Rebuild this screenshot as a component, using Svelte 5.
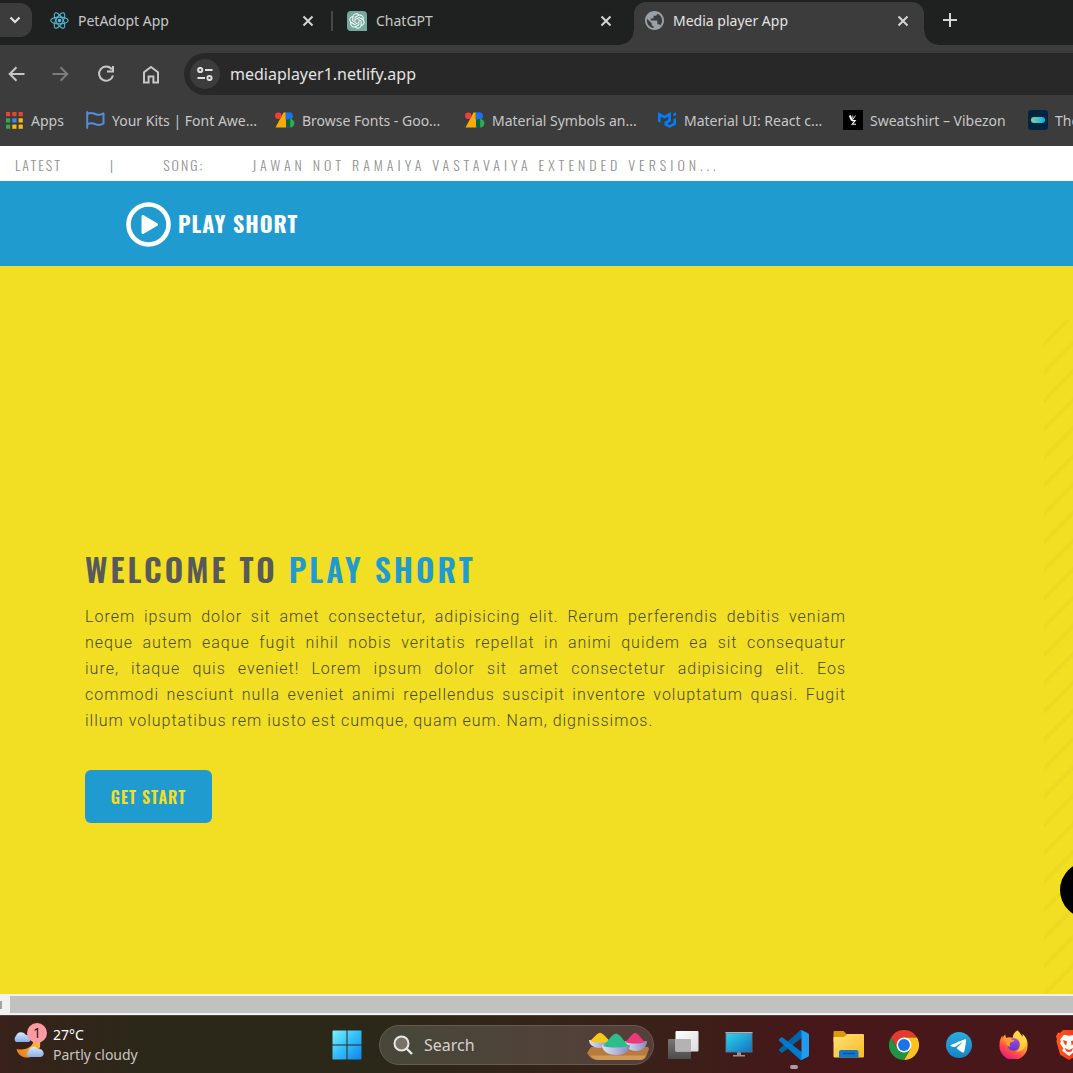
<script>
  const tabs = [
    { title: 'PetAdopt App', icon: 'react', active: false },
    { title: 'ChatGPT', icon: 'gpt', active: false },
    { title: 'Media player App', icon: 'globe', active: true }
  ];

  const bookmarks = [
    { title: 'Apps', icon: 'apps' },
    { title: 'Your Kits | Font Awe...', icon: 'flag' },
    { title: 'Browse Fonts - Goo...', icon: 'gfonts' },
    { title: 'Material Symbols an...', icon: 'gfonts' },
    { title: 'Material UI: React c...', icon: 'mui' },
    { title: 'Sweatshirt – Vibezon', icon: 'vibezon' },
    { title: 'The', icon: 'tmdb' }
  ];

  const introLines = [
    'Lorem ipsum dolor sit amet consectetur, adipisicing elit. Rerum perferendis debitis veniam',
    'neque autem eaque fugit nihil nobis veritatis repellat in animi quidem ea sit consequatur',
    'iure, itaque quis eveniet! Lorem ipsum dolor sit amet consectetur adipisicing elit. Eos',
    'commodi nesciunt nulla eveniet animi repellendus suscipit inventore voluptatum quasi. Fugit',
    'illum voluptatibus rem iusto est cumque, quam eum. Nam, dignissimos.'
  ];

  const apps = [
    { name: 'Task View', icon: 'taskview' },
    { name: 'Desktop', icon: 'desktop' },
    { name: 'Visual Studio Code', icon: 'vscode', running: true },
    { name: 'File Explorer', icon: 'folder' },
    { name: 'Google Chrome', icon: 'chrome' },
    { name: 'Telegram', icon: 'telegram' },
    { name: 'Firefox', icon: 'firefox' },
    { name: 'Brave', icon: 'brave' }
  ];

  const appColors = ['#ea4335', '#ea4335', '#ea4335', '#34a853', '#4285f4', '#fbbc04', '#34a853', '#fbbc04', '#fbbc04'];
  let address = $state('mediaplayer1.netlify.app');
</script>

{#snippet icon(name)}
  {#if name === 'react'}
    <svg width="19" height="19" viewBox="0 0 24 24" fill="none" stroke="#4fb9d6" stroke-width="1.4">
      <ellipse cx="12" cy="12" rx="11" ry="4.3" />
      <ellipse cx="12" cy="12" rx="11" ry="4.3" transform="rotate(60 12 12)" />
      <ellipse cx="12" cy="12" rx="11" ry="4.3" transform="rotate(120 12 12)" />
      <circle cx="12" cy="12" r="1.6" fill="#61dafb" />
    </svg>
  {:else if name === 'gpt'}
    <svg width="20" height="20" viewBox="0 0 20 20">
      <path d="M4 0h12a4 4 0 0 1 4 4v16H4a4 4 0 0 1-4-4V4a4 4 0 0 1 4-4z" fill="#74aa9c" />
      <path transform="translate(2.3 2.3) scale(.64)" fill="#fff" d="M22.2819 9.8211a5.9847 5.9847 0 0 0-.5157-4.9108 6.0462 6.0462 0 0 0-6.5098-2.9A6.0651 6.0651 0 0 0 4.9807 4.1818a5.9847 5.9847 0 0 0-3.9977 2.9 6.0462 6.0462 0 0 0 .7427 7.0966 5.98 5.98 0 0 0 .511 4.9107 6.051 6.051 0 0 0 6.5146 2.9001A5.9847 5.9847 0 0 0 13.2599 24a6.0557 6.0557 0 0 0 5.7718-4.2058 5.9894 5.9894 0 0 0 3.9977-2.9001 6.0557 6.0557 0 0 0-.7475-7.0729zm-9.022 12.6081a4.4755 4.4755 0 0 1-2.8764-1.0408l.1419-.0804 4.7783-2.7582a.7948.7948 0 0 0 .3927-.6813v-6.7369l2.02 1.1686a.071.071 0 0 1 .038.052v5.5826a4.504 4.504 0 0 1-4.4945 4.4944zm-9.6607-4.1254a4.4708 4.4708 0 0 1-.5346-3.0137l.142.0852 4.783 2.7582a.7712.7712 0 0 0 .7806 0l5.8428-3.3685v2.3324a.0804.0804 0 0 1-.0332.0615L9.74 19.9502a4.4992 4.4992 0 0 1-6.1408-1.6464zM2.3408 7.8956a4.485 4.485 0 0 1 2.3655-1.9728V11.6a.7664.7664 0 0 0 .3879.6765l5.8144 3.3543-2.0201 1.1685a.0757.0757 0 0 1-.071 0l-4.8303-2.7865A4.504 4.504 0 0 1 2.3408 7.872zm16.5963 3.8558L13.1038 8.364 15.1192 7.2a.0757.0757 0 0 1 .071 0l4.8303 2.7913a4.4944 4.4944 0 0 1-.6765 8.1042v-5.6772a.79.79 0 0 0-.407-.667zm2.0107-3.0231l-.142-.0852-4.7735-2.7818a.7759.7759 0 0 0-.7854 0L9.409 9.2297V6.8974a.0662.0662 0 0 1 .0284-.0615l4.8303-2.7866a4.4992 4.4992 0 0 1 6.6802 4.66zM8.3065 12.863l-2.02-1.1638a.0804.0804 0 0 1-.038-.0567V6.0742a4.4992 4.4992 0 0 1 7.3757-3.4537l-.142.0805L8.704 5.459a.7948.7948 0 0 0-.3927.6813zm1.0976-2.3654l2.602-1.4998 2.6069 1.4998v2.9994l-2.5974 1.4997-2.6067-1.4997Z" />
    </svg>
  {:else if name === 'globe'}
    <svg width="19" height="19" viewBox="2 2 20 20" fill="#9aa0a6">
      <path d="M12 2C6.48 2 2 6.48 2 12s4.48 10 10 10 10-4.48 10-10S17.52 2 12 2zm-1 17.93c-3.95-.49-7-3.85-7-7.93 0-.62.08-1.21.21-1.79L9 15v1c0 1.1.9 2 2 2v1.93zm6.900-2.540c-.26-.81-1-1.39-1.900-1.39h-1v-3c0-.55-.45-1-1-1H8v-2h2c.55 0 1-.45 1-1V7h2c1.100 0 2-.9 2-2v-.41c2.930 1.190 5 4.060 5 7.410 0 2.080-.8 3.970-2.100 5.390z" />
    </svg>
  {:else if name === 'apps'}
    <svg width="17" height="17" viewBox="0 0 17 17">
      {#each appColors as color, i}
        <rect x={(i % 3) * 6.3} y={Math.floor(i / 3) * 6.3} width="4.2" height="4.2" fill={color} />
      {/each}
    </svg>
  {:else if name === 'flag'}
    <svg width="19" height="18" viewBox="0 0 19 18" fill="none" stroke="#538dd7" stroke-width="2" stroke-linecap="round" stroke-linejoin="round">
      <path d="M1.2 1v16M1.2 3c3-1.6 5.500-1.200 8 0s5 1.200 8.300-.6v10.300c-3.300 1.600-5.800 1.600-8.300.4s-5-1.400-8 .4" />
    </svg>
  {:else if name === 'gfonts'}
    <svg width="20" height="16" viewBox="0 0 20 16">
      <path d="M8.500.5H11.500V15.500H8.500L8 15.500H.5z" fill="#f9ab00" />
      <rect x="11" y=".5" width="4.500" height="15" fill="#174ea6" />
      <circle cx="3.300" cy="3.800" r="3.200" fill="#ea4335" />
      <path d="M14.500.5a3.400 3.400 0 0 1 0 6.900z" fill="#1a73e8" />
      <path d="M10.500.5h4.500v6.900h-4.500z" fill="#1a73e8" />
      <circle cx="15.200" cy="11.200" r="4.200" fill="#0d652d" />
      <path d="M15.200 7a4.200 4.200 0 0 1 0 8.500z" fill="#34a853" />
    </svg>
  {:else if name === 'mui'}
    <svg width="18" height="16" viewBox="0 0 36 32" fill="#007fff">
      <path d="M30.343 21.976a1 1 0 00.502-.864l.018-5.787a1 1 0 01.502-.864l3.137-1.802a1 1 0 011.498.867v10.521a1 1 0 01-.502.867l-11.839 6.8a1 1 0 01-.994.001l-9.291-5.314a1 1 0 01-.504-.868v-5.305l.031-.03 7.652-4.396.007-5.224a1 1 0 00-1.5-.87l-5.687 3.277a1 1 0 01-.998 0L6.666 9.7a1 1 0 00-1.499.866v9.4a1 1 0 01-1.496.869l-3.166-1.81a1 1 0 01-.504-.87l.028-16.43A1 1 0 011.527.86l10.845 6.229a1 1 0 00.996 0L24.21.86a1 1 0 011.498.868v16.434a1 1 0 01-.501.867l-5.678 3.27a1 1 0 00.004 1.735l3.132 1.783a1 1 0 00.993-.002l6.685-3.839zM31 7.234a1 1 0 001.514.857l3-1.8A1 1 0 0036 5.434V1.766A1 1 0 0034.486.91l-3 1.8a1 1 0 00-.486.857v3.668z" />
    </svg>
  {:else if name === 'vibezon'}
    <svg width="20" height="20" viewBox="0 0 20 20" fill="none" stroke="#fff">
      <rect width="20" height="20" fill="#000" stroke="none" />
      <path d="M6.800 5.500l2.200 5" stroke-width="2" />
      <path d="M12.500 5.500L9 10.800M9.800 5.500v3" stroke-width=".8" />
      <path d="M8.800 10.600h3.400l-3 3.600h3.800" stroke-width="1.100" />
    </svg>
  {:else if name === 'tmdb'}
    <svg width="20" height="20" viewBox="0 0 20 20">
      <defs><linearGradient id="tm"><stop stop-color="#90cea1" /><stop offset=".6" stop-color="#3cbec9" /><stop offset="1" stop-color="#00b3e5" /></linearGradient></defs>
      <rect width="20" height="20" rx="3" fill="#032541" />
      <rect x="3" y="7" width="14" height="6" rx="3" fill="url(#tm)" />
    </svg>
  {:else if name === 'close'}
    <svg width="12" height="12" viewBox="0 0 12 12" stroke="currentColor" stroke-width="2"><path d="M1.500 1.500l9 9M10.500 1.500l-9 9" /></svg>
  {:else if name === 'taskview'}
    <svg width="31" height="28" viewBox="0 0 31 28">
      <defs>
        <linearGradient id="tv1" x2="1" y2="1"><stop stop-color="#fff" /><stop offset="1" stop-color="#dcdcdc" /></linearGradient>
        <linearGradient id="tv2" x2="0" y2="1"><stop stop-color="#777" /><stop offset="1" stop-color="#4c4c4c" /></linearGradient>
      </defs>
      <rect y="8" width="23" height="20" rx="1" fill="url(#tv2)" />
      <rect x="7.500" width="23" height="20.500" rx="1" fill="url(#tv1)" />
      <path d="M7.500 8H22a1 1 0 0 1 1 1v11.500H7.500z" fill="#b4b2b2" />
    </svg>
  {:else if name === 'desktop'}
    <svg width="28" height="25" viewBox="0 0 28 25">
      <defs><linearGradient id="dk" x2="1" y2="1"><stop stop-color="#2fd3e6" /><stop offset="1" stop-color="#1074c4" /></linearGradient></defs>
      <path d="M12 20h4v3h4v1.500H8V23h4z" fill="#8d969f" />
      <rect x=".5" y=".5" width="27" height="20" fill="#5b6d78" />
      <rect x="1.300" y="1.600" width="25.400" height="18" fill="url(#dk)" />
      <rect x=".5" width="27" height="1.300" fill="#a9b2b8" />
    </svg>
  {:else if name === 'vscode'}
    <svg width="30" height="30" viewBox="0 0 100 100">
      <path d="M96.500 10.800L75.900.9a6.200 6.200 0 0 0-7.100 1.200L1.300 63.600a4.200 4.200 0 0 0 0 6.200l5.500 5a4.200 4.200 0 0 0 5.300.2L93.400 13.400c2.700-2.100 6.600-.1 6.600 3.300v-.3a6.200 6.200 0 0 0-3.500-5.600z" fill="#0065a9" />
      <path d="M96.500 89.200l-20.600 9.900a6.200 6.200 0 0 1-7.100-1.200L1.300 36.400a4.200 4.200 0 0 1 0-6.200l5.500-5a4.200 4.200 0 0 1 5.300-.2l81.300 61.600c2.700 2.100 6.600.1 6.600-3.300v.3a6.200 6.200 0 0 1-3.500 5.600z" fill="#007acc" />
      <path d="M75.900 99.100a6.200 6.200 0 0 1-7.100-1.200c2.300 2.300 6.200.7 6.200-2.600V4.700c0-3.300-3.900-4.900-6.200-2.600a6.200 6.200 0 0 1 7.100-1.200l20.600 9.900a6.200 6.200 0 0 1 3.500 5.600v67.200a6.200 6.200 0 0 1-3.500 5.600z" fill="#1f9cf0" />
    </svg>
  {:else if name === 'folder'}
    <svg width="31" height="27" viewBox="0 0 31 27">
      <defs><linearGradient id="fo" x2="1" y2="1"><stop stop-color="#ffe078" /><stop offset="1" stop-color="#fbbb20" /></linearGradient></defs>
      <path d="M1.500 0h9l3 3H30v8H.5V1a1 1 0 0 1 1-1z" fill="#dc9a08" />
      <path d="M.5 6h10.500l3.500-3H30a1 1 0 0 1 1 1v21.500a1 1 0 0 1-1 1H1.500a1 1 0 0 1-1-1z" fill="url(#fo)" />
      <path d="M6 26.500V21a2 2 0 0 1 2-2h15.500a2 2 0 0 1 2 2v5.500z" fill="#1277cb" />
      <path d="M10 22.500h12" stroke="#09508f" stroke-width="1.300" />
    </svg>
  {:else if name === 'chrome'}
    <svg width="30" height="30" viewBox="0 0 48 48">
      <path d="M24 12h20.800A24 24 0 0 0 3.200 12l10.400 18z" fill="#e33b2e" />
      <path d="M34.400 30L24 48a24 24 0 0 0 20.800-36H24z" fill="#fcc31e" />
      <path d="M13.600 30L3.200 12A24 24 0 0 0 24 48l10.400-18z" fill="#229342" />
      <circle cx="24" cy="24" r="12" fill="#fff" />
      <circle cx="24" cy="24" r="9.500" fill="#1a73e8" />
    </svg>
  {:else if name === 'telegram'}
    <svg width="26" height="26" viewBox="0 0 240 240">
      <defs><linearGradient id="tg" x2="0" y2="1"><stop stop-color="#2aabdf" /><stop offset="1" stop-color="#1486c7" /></linearGradient></defs>
      <circle cx="120" cy="120" r="120" fill="url(#tg)" />
      <path d="M44 121c40-18 68-29 82-35 39-16 47-19 52-19 1 0 4 0 6 2 2 1 2 3 2 6-2 22-11 76-16 101-2 11-6 14-10 14-8 1-14-5-22-10-12-8-19-13-31-21-14-9-5-14 3-22 2-2 38-34 38-37 0-1 0-3-2-2-2 0-20 12-55 36-6 4-11 5-14 5-5 0-14-2-20-5-8-2-14-4-14-8 0-1 0-3 1-5z" fill="#fff" />
    </svg>
  {:else if name === 'firefox'}
    <svg width="29" height="29" viewBox="0 0 29 29">
      <defs>
        <linearGradient id="ff" x1=".8" y1="0" x2=".25" y2="1"><stop stop-color="#fff44f" /><stop offset=".4" stop-color="#ffa033" /><stop offset=".7" stop-color="#ff4a4a" /><stop offset="1" stop-color="#e31587" /></linearGradient>
        <linearGradient id="fp" x2="0" y2="1"><stop stop-color="#a04be6" /><stop offset="1" stop-color="#5b39c4" /></linearGradient>
      </defs>
      <path d="M18.500.5c3 3 4 4.500 4.500 6.500 1-.5.8-2 .6-3C28 8 29 12 28.500 16.500A14 14 0 0 1 .5 15.500C.3 11 1.500 8 3.500 5.500V8c1-2 2-3 3-3.500-.2 1.500.3 2.500 1 3.500 2-1 4.500-.8 6 0 1-4 2.500-6 5-7.500z" fill="url(#ff)" />
      <circle cx="14.500" cy="14.500" r="6.200" fill="url(#fp)" />
      <path d="M5 8.500c2.500-1.200 5-.8 7 .6 1 .7 2.500 1 3.500 1.400-.6 1.500-3.300 1.200-4.300 2.600-.7 1.200-.7 2.400.3 3.400-2.500.5-4.200-1.200-4.500-3.500C7 11.500 5 10.500 5 8.500z" fill="#ff9b30" />
      <path d="M18.500.5c-3 1.500-4.500 4-4.700 7 5 0 8 3 7.200 8.500-.5 3-2 4.500-4 5.500 5 .5 9-2.500 10-7 .8-4-.8-8-3.400-10.500.2 1 .4 2.500-.6 3-.5-2-1.500-3.500-4.500-6.500z" fill="#ffd83c" fill-opacity=".75" />
    </svg>
  {:else if name === 'brave'}
    <svg width="26" height="30" viewBox="0 0 26 30">
      <defs><linearGradient id="br"><stop stop-color="#ff5a1c" /><stop offset="1" stop-color="#f52b0c" /></linearGradient></defs>
      <path d="M7 0h12l3 3 2-.4 2 4-1 3 .6 2-3.800 13.200L13 30l-8.800-5.200L.4 11.600 1 9.600 0 6.600l2-4 2 .4z" fill="url(#br)" />
      <path d="M8 4.800l5 1 5-1 4 5-1 1.800 1 1.700-3.500 5.200 1.500 2L13 26l-7-5.500 1.500-2L4 13.300l1-1.700-1-1.800z" fill="#fff" />
      <path d="M7 10l4 1.200-.6 4.200L8 13.500zM19 10l-4 1.200.6 4.200 2.400-1.900zM9 18l4 2 4-2-1 3-3 1.600-3-1.600z" fill="#fb4a19" />
    </svg>
  {/if}
{/snippet}

<div class="screen">
  <header class="browser">
    <div class="tabstrip">
      <button class="tab-search" aria-label="Search tabs">
        <svg width="12" height="8" viewBox="0 0 12 8" fill="none" stroke="#e3e3e3" stroke-width="2.200"><path d="M1.500 1.500L6 6l4.500-4.500" /></svg>
      </button>
      {#each tabs as tab}
        <div class="tab" class:active={tab.active}>
          <button class="tab-label">
            <span class="favicon">{@render icon(tab.icon)}</span>
            <span>{tab.title}</span>
          </button>
          <button class="tab-close" aria-label="Close {tab.title}">{@render icon('close')}</button>
        </div>
      {/each}
      <button class="new-tab" aria-label="New tab">
        <svg width="14" height="14" viewBox="0 0 14 14" stroke="#d5d5d5" stroke-width="2"><path d="M7 0v14M0 7h14" /></svg>
      </button>
    </div>

    <div class="toolbar">
      <nav class="nav-buttons">
        <button aria-label="Back"><svg width="17" height="16" viewBox="0 0 17 16" fill="none" stroke="#c7c7c7" stroke-width="2"><path d="M16.500 8H2M8.500 1.200L1.700 8l6.800 6.800" /></svg></button>
        <button aria-label="Forward"><svg width="17" height="16" viewBox="0 0 17 16" fill="none" stroke="#7c7c7c" stroke-width="2"><path d="M.5 8H15M8.500 1.200L15.300 8l-6.800 6.800" /></svg></button>
        <button aria-label="Reload"><svg width="18" height="18" viewBox="0 0 18 18" fill="none" stroke="#c7c7c7" stroke-width="2"><path d="M14.800 4.300A7.100 7.100 0 1 0 16 10.500" /><path d="M16 1v5.500h-6" /></svg></button>
        <button aria-label="Home"><svg width="18" height="19" viewBox="0 0 18 19" fill="none" stroke="#c7c7c7" stroke-width="2"><path d="M2 7.300L9 2l7 5.300V17.500h-4.600v-6H6.600v6H2z" /></svg></button>
      </nav>
      <div class="omnibox">
        <button class="site-info" aria-label="Site information">
          <svg width="16" height="14" viewBox="0 0 16 14" fill="none" stroke="#e0e0e0" stroke-width="2"><circle cx="3.200" cy="3" r="2.100" /><path d="M8 3h7.500M.5 11H8" /><circle cx="12.500" cy="11" r="2.100" /></svg>
        </button>
        <input class="address" type="text" aria-label="Address" bind:value={address} />
      </div>
    </div>

    <nav class="bookmarks" aria-label="Bookmarks">
      {#each bookmarks as mark}
        <a href="#bookmark"><span class="favicon">{@render icon(mark.icon)}</span>{mark.title}</a>
      {/each}
    </nav>
  </header>

  <div class="page">
    <div class="ticker">
      <span class="tag">LATEST</span>
      <span class="tag">|</span>
      <span class="tag">SONG:</span>
      <span class="song">JAWAN NOT RAMAIYA VASTAVAIYA EXTENDED VERSION...</span>
    </div>

    <div class="brandbar">
      <a class="brand" href="#home">
        <svg width="45" height="45" viewBox="0 0 45 45"><circle cx="22.500" cy="22.500" r="20" fill="none" stroke="#fff" stroke-width="4.600" /><path d="M17 14.500v16l13.500-8z" fill="#fff" stroke="#fff" stroke-width="3" stroke-linejoin="round" /></svg>
        <span>PLAY SHORT</span>
      </a>
    </div>

    <main class="hero">
      <section class="intro">
        <h1>WELCOME TO <span>PLAY SHORT</span></h1>
        <p>{#each introLines as line}<span class="line">{line}</span>{' '}{/each}</p>
        <button class="cta">GET START</button>
      </section>
      <div class="artwork"><div class="blob"></div></div>
    </main>
    <div class="scrollbar"><span class="arrow"></span><span class="thumb"></span></div>
  </div>

  <footer class="taskbar">
    <button class="weather">
      <span class="weather-icon">
        <svg width="32" height="30" viewBox="0 0 32 30">
          <defs>
            <linearGradient id="cl" x2="0" y2="1"><stop stop-color="#dbe8fb" /><stop offset="1" stop-color="#88aee9" /></linearGradient>
            <linearGradient id="mo" x1="1" x2="0" y2="1"><stop stop-color="#ffc83a" /><stop offset="1" stop-color="#e8761a" /></linearGradient>
          </defs>
          <path d="M3 12a4 4 0 0 1 0-6 5.500 5.500 0 0 1 10-1 4 4 0 0 1 3 7z" fill="url(#cl)" />
          <path d="M26 6c3 10 1 19-10 21.500C9 28 5 25 3.500 19 13 21 21 17 21 8z" fill="url(#mo)" />
          <path d="M15.500 27a3.700 3.700 0 0 1 0-6 5 5 0 0 1 9.500-1.500 4 4 0 0 1 3 7.500z" fill="url(#cl)" />
        </svg>
        <span class="badge">1</span>
      </span>
      <span class="forecast"><span>27°C</span><span class="summary">Partly cloudy</span></span>
    </button>
    <button class="app" aria-label="Start">
      <svg width="30" height="30" viewBox="0 0 30 30">
        <defs><linearGradient id="wn" gradientUnits="userSpaceOnUse" x1="0" y1="0" x2="30" y2="30"><stop stop-color="#7df4ff" /><stop offset=".5" stop-color="#32bdf9" /><stop offset="1" stop-color="#0a82e8" /></linearGradient></defs>
        <path d="M1 .5h13.500v14H.5V1zM15.500.5H29l.5.5v13.500h-14zM.5 15.500h14v14H1l-.5-.5zM15.500 15.500h14V29l-.5.5H15.500z" fill="url(#wn)" />
      </svg>
    </button>
    <label class="search">
      <svg width="20" height="20" viewBox="0 0 20 20" fill="none" stroke="#e8e6e6" stroke-width="2"><circle cx="8.500" cy="8.500" r="7" fill="#777166" /><path d="M13.500 13.500L19 19" stroke-width="2.400" /></svg>
      <input type="text" placeholder="Search" aria-label="Search" />
      <svg width="64" height="28" viewBox="0 0 64 28">
        <defs><linearGradient id="bw" x2="1"><stop stop-color="#dfe2f5" /><stop offset=".6" stop-color="#a9aeda" /><stop offset="1" stop-color="#8388bd" /></linearGradient></defs>
        <path d="M5 15h57l1 2-3 8c-1 2-3 3-6 3H13c-4 0-7-1-9-3l-3-4z" fill="#b87a3d" />
        <path d="M4 23.500h56c-1 2-3 4.500-6 4.500H13c-4 0-7-2-9-4.500z" fill="#d29a58" />
        <path d="M3 8h22c0 5-5 8-11 8S3 13 3 8z" fill="url(#bw)" />
        <path d="M4 9C8 6 10 2 14 .8c4 1.200 6 5 10 8.200-5 2-15 2-20 0z" fill="#f4c91c" />
        <path d="M39 9h22c0 6-5 10-11 10s-11-4-11-10z" fill="url(#bw)" />
        <path d="M39 10C43 8 45 2 49 .8c4 1.200 6 6 10 9.200-6 2-14 2-20 0z" fill="#ec3a78" />
        <path d="M16 13h28c0 6-6 10-14 10s-14-4-14-10z" fill="url(#bw)" />
        <path d="M17 14C22 10 25 2.500 30 1.500c5 1 8 8.500 13 12.500-6 2-20 2-26 0z" fill="#2ebd8a" />
      </svg>
    </label>
    {#each apps as app}
      <button class="app" class:running={app.running} aria-label={app.name}>{@render icon(app.icon)}</button>
    {/each}
  </footer>
</div>

<style>
  :global(body) {
    margin: 0;
    overflow: hidden;
  }
  .screen {
    display: flex;
    flex-direction: column;
    min-height: 100vh;
    overflow: hidden;
    font-family: 'Segoe UI', 'Noto Sans', 'Open Sans', sans-serif;
    font-size: 14px;
  }
  .screen * {
    box-sizing: border-box;
  }
  button {
    display: flex;
    align-items: center;
    justify-content: center;
    padding: 0;
    border: 0;
    background: none;
    color: inherit;
    font: inherit;
  }
  a {
    color: inherit;
    text-decoration: none;
  }
  input {
    min-width: 0;
    padding: 0;
    border: 0;
    outline: 0;
    background: none;
    color: inherit;
    font: inherit;
  }
  svg {
    display: block;
    flex: none;
  }

  .browser {
    background: #3c3c3c;
    color: #c7c7c7;
  }
  .tabstrip {
    display: grid;
    grid-template-columns: 35px 298px 301px 290px 51px;
    height: 45px;
    background: #1f2120;
  }
  .tab-search {
    width: 32px;
    height: 34px;
    margin-top: 3px;
    padding-right: 3px;
    border-radius: 0 12px 12px 0;
    background: #3c3c3c;
  }
  .tab {
    display: flex;
    align-items: center;
    justify-content: space-between;
    height: 41px;
    padding: 0 18px 0 14px;
  }
  .tab:nth-child(2) {
    background: linear-gradient(#474747, #474747) right center / 2px 20px no-repeat;
  }
  .tab:nth-child(3) {
    padding-right: 21px;
  }
  .tab.active {
    position: relative;
    height: 43px;
    margin-top: 2px;
    padding: 0 14px 6px 10px;
    border-radius: 12px 12px 0 0;
    background: #3c3c3c;
    color: #e3e3e3;
  }
  .tab.active::before,
  .tab.active::after {
    content: '';
    position: absolute;
    bottom: 0;
    width: 14px;
    height: 14px;
  }
  .tab.active::before {
    right: 100%;
    background: radial-gradient(circle at 0 0, transparent 13px, #3c3c3c 14px);
  }
  .tab.active::after {
    left: 100%;
    background: radial-gradient(circle at 100% 0, transparent 13px, #3c3c3c 14px);
  }
  .tab-label {
    gap: 9px;
    white-space: nowrap;
  }
  .favicon {
    display: flex;
    justify-content: center;
    width: 20px;
  }
  .tab-close {
    width: 14px;
    height: 20px;
    color: #d5d5d5;
  }
  .new-tab {
    height: 40px;
  }

  .toolbar {
    display: flex;
    align-items: center;
    height: 58px;
  }
  .nav-buttons {
    display: flex;
    flex: none;
    width: 184px;
  }
  .nav-buttons button {
    width: 45px;
    height: 40px;
  }
  .nav-buttons button:first-child {
    width: 38px;
    padding-right: 5px;
  }
  .omnibox {
    display: flex;
    flex: 1;
    align-items: center;
    gap: 10px;
    height: 42px;
    padding-left: 6px;
    border-radius: 21px 0 0 21px;
    background: #282828;
  }
  .site-info {
    width: 30px;
    height: 30px;
    border-radius: 50%;
    background: #3c3c3c;
  }
  .address {
    flex: 1;
    color: #e3e3e3;
    font-size: 16px;
  }
  .bookmarks {
    display: grid;
    grid-template-columns: 81px 190px 190px 192px 186px 185px 150px;
    height: 43px;
    padding: 0 0 9px 4px;
  }
  .bookmarks a {
    display: flex;
    align-items: center;
    gap: 7px;
    white-space: nowrap;
  }

  .page {
    display: flex;
    flex: 1;
    flex-direction: column;
    font-family: Oswald, 'Roboto Condensed', 'Liberation Sans Narrow', 'Liberation Sans', sans-serif;
  }
  .ticker {
    display: flex;
    gap: 48px;
    height: 35px;
    padding-left: 15px;
    background: #fff;
    color: #919191;
    font-size: 14px;
    font-weight: 300;
    line-height: 38px;
    letter-spacing: 2px;
    white-space: nowrap;
  }
  .song {
    letter-spacing: 4px;
  }
  .brandbar {
    display: flex;
    align-items: center;
    height: 85px;
    padding: 2px 0 0 126px;
    background: #209bd0;
    color: #fff;
  }
  .brand {
    display: flex;
    align-items: center;
    gap: 7px;
    font-size: 22px;
    font-weight: 700;
    line-height: 45px;
    letter-spacing: 1px;
  }
  .brand span {
    padding-bottom: 3px;
  }
  .hero {
    display: flex;
    flex: 1;
    justify-content: space-between;
    background: #f2de22;
  }
  .intro {
    display: flex;
    flex-direction: column;
    align-items: flex-start;
    justify-content: flex-end;
    width: 846px;
    padding: 0 0 171px 85px;
  }
  h1 {
    margin: 0;
    color: #58595b;
    font-size: 32px;
    font-weight: 600;
    line-height: 48px;
    letter-spacing: 3px;
    white-space: nowrap;
  }
  h1 span {
    color: #209bd0;
  }
  p {
    width: 100%;
    margin: 11px 0 36px;
    color: #4c4c33;
    font-family: Roboto, sans-serif;
    font-size: 16px;
    font-weight: 300;
    line-height: 26px;
    letter-spacing: 1px;
  }
  .line {
    display: block;
    text-align: justify;
    text-align-last: justify;
  }
  .line:last-child {
    text-align-last: left;
  }
  .cta {
    width: 127px;
    height: 53px;
    border-radius: 6px;
    background: #209bd0;
    color: #f2de22;
    font-size: 16px;
    font-weight: 600;
    letter-spacing: 1px;
  }
  .artwork {
    position: relative;
    width: 29px;
    margin-top: 54px;
    overflow: hidden;
    background: repeating-linear-gradient(135deg, transparent 0 14px, #eed922 16px 18px, transparent 20px);
  }
  .blob {
    position: absolute;
    bottom: 76px;
    left: 16px;
    width: 56px;
    height: 56px;
    border-radius: 50%;
    background: #000;
  }
  .scrollbar {
    display: flex;
    align-items: center;
    gap: 8px;
    height: 21px;
    background: #f1f1f1;
  }
  .arrow {
    width: 2px;
    height: 8px;
    background: #a3a3a3;
  }
  .thumb {
    flex: 1;
    height: 17px;
    background: #c1c1c1;
  }

  .taskbar {
    display: flex;
    align-items: center;
    height: 58px;
    border-top: 1px solid #4b4541;
    background: linear-gradient(90deg, #38211a 0, #2b2819 13%, #2b2819 35%, #3a2018 62%, #47171a 76%, #47171a);
    color: #fff;
  }
  .weather {
    flex: none;
    justify-content: flex-start;
    gap: 8px;
    width: 319px;
    padding-left: 13px;
    text-align: left;
  }
  .weather-icon {
    position: relative;
  }
  .badge {
    position: absolute;
    top: -7px;
    right: -2px;
    width: 20px;
    height: 20px;
    border-radius: 50%;
    background: #ff99a4;
    color: #222;
    font-size: 14px;
    line-height: 20px;
    text-align: center;
  }
  .forecast {
    display: flex;
    flex-direction: column;
    line-height: 20px;
  }
  .summary {
    color: #c8c5c0;
  }
  .app {
    position: relative;
    flex: none;
    width: 55px;
    height: 56px;
  }
  .running::after {
    content: '';
    position: absolute;
    bottom: 4px;
    width: 8px;
    height: 4px;
    border-radius: 2px;
    background: #b39a9c;
  }
  .search {
    display: flex;
    flex: none;
    align-items: center;
    gap: 11px;
    width: 275px;
    height: 40px;
    margin: 0 2px 0 5px;
    padding: 0 3px 0 13px;
    border: 1px solid #655b50;
    border-radius: 20px;
    background: linear-gradient(90deg, #47473a, #563f38);
  }
  .search svg:last-child {
    margin-top: 3px;
  }
  .search input {
    flex: 1;
    color: #d5d2cd;
    font-size: 16px;
  }
  .search input::placeholder {
    color: #d5d2cd;
    opacity: 1;
  }
</style>
